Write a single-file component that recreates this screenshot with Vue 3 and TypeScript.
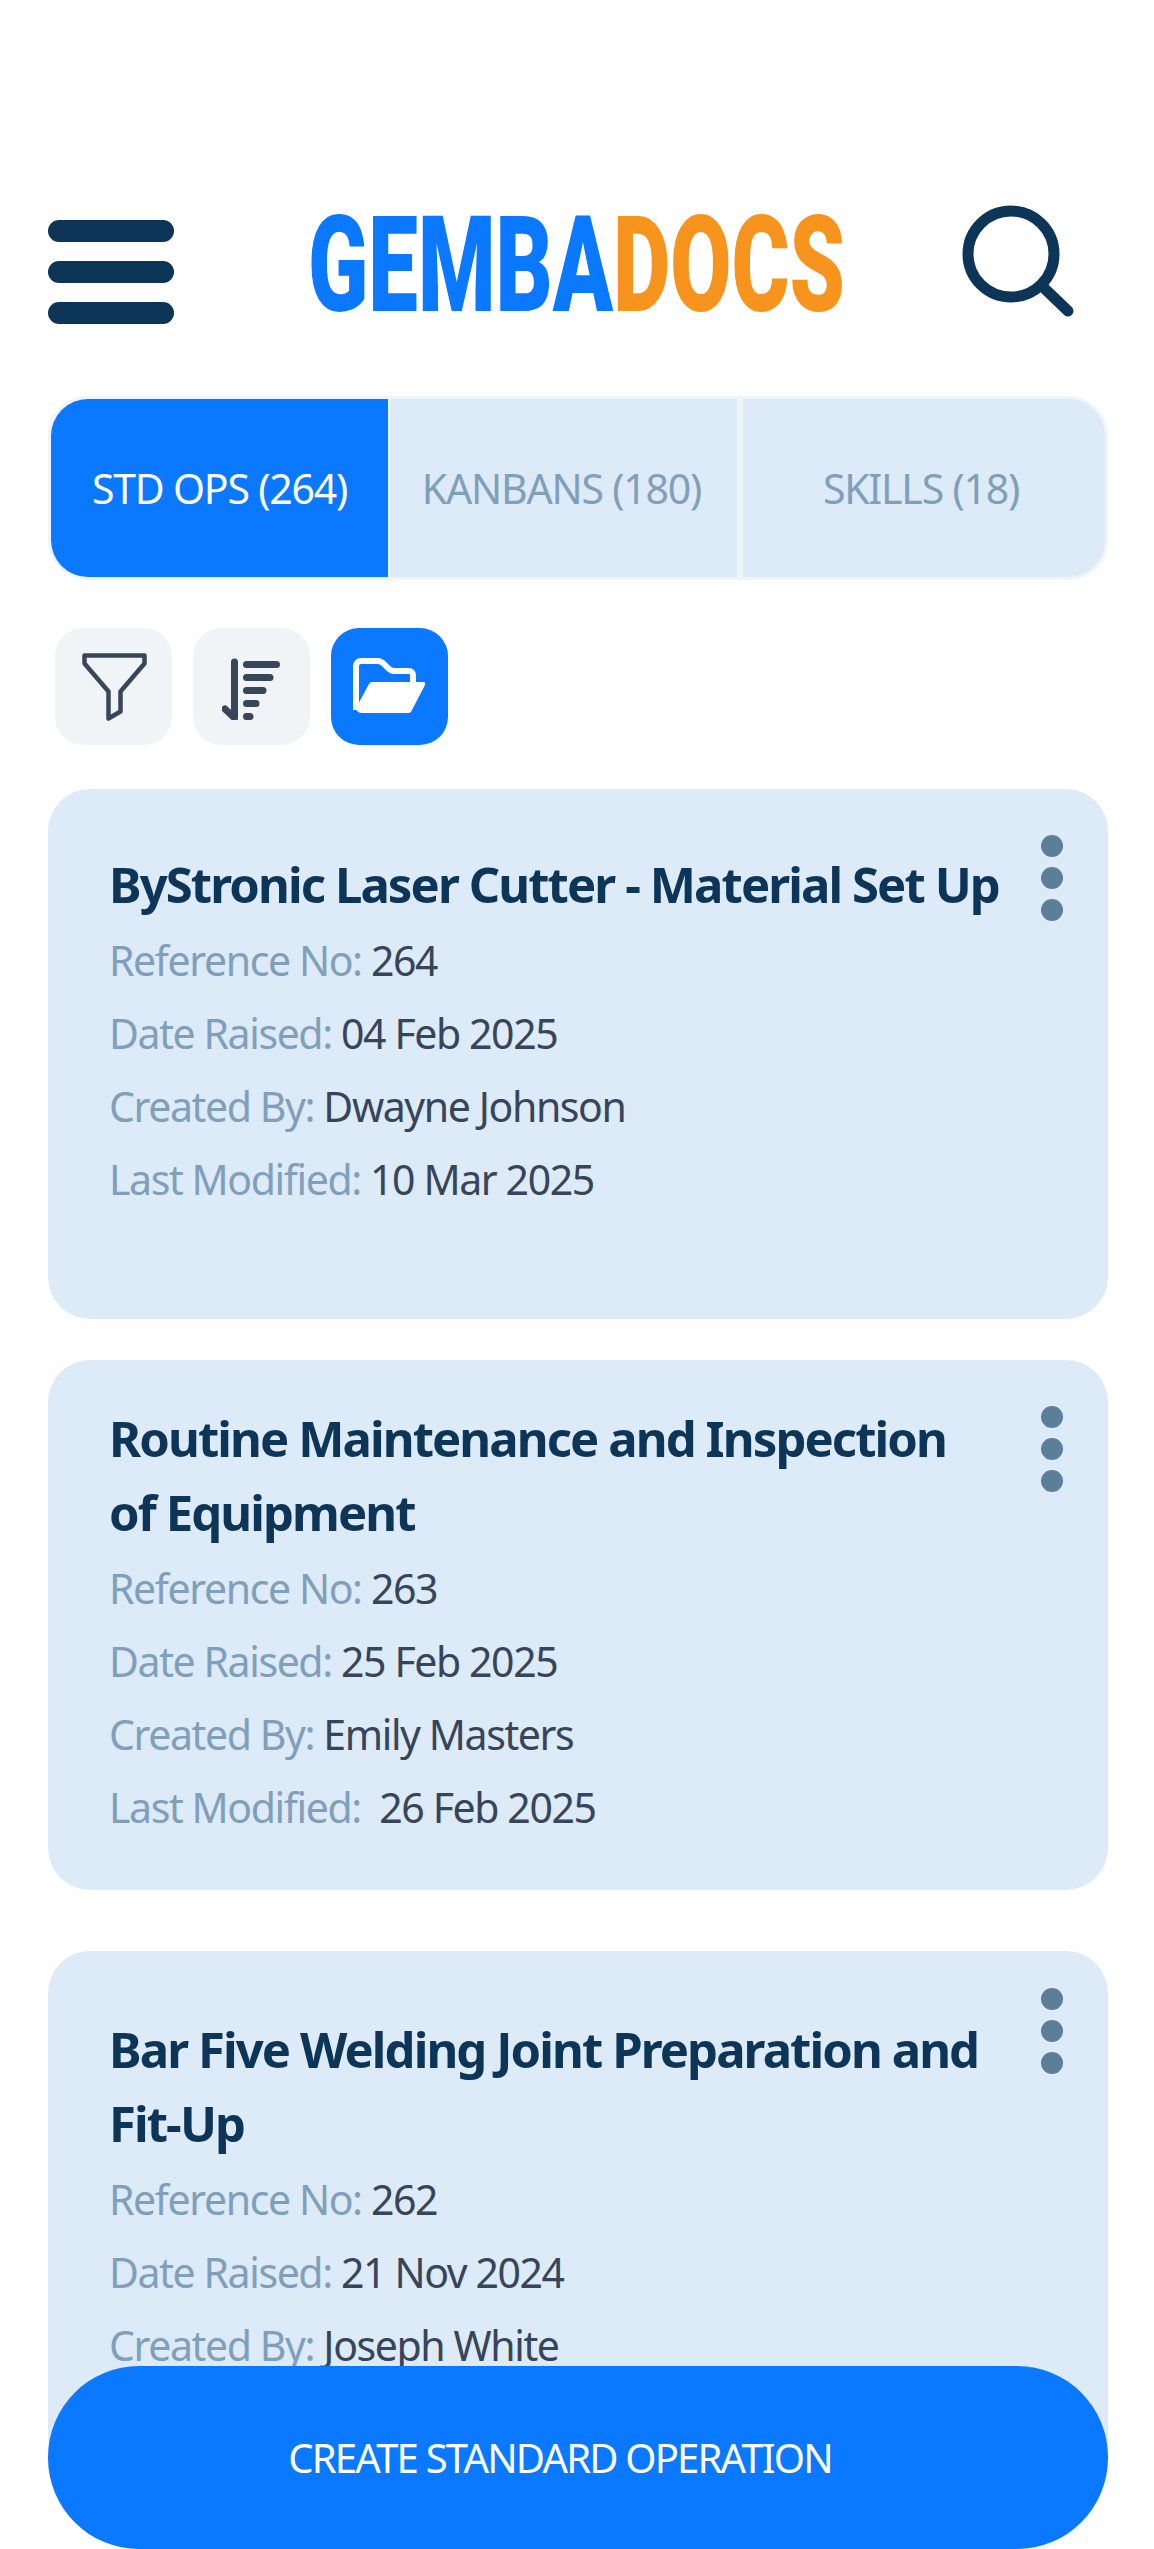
<script setup lang="ts">
interface Doc {
  title: string
  ref: string
  raised: string
  by: string
  modified?: string
  cls: string
}

const tabs = [
  { label: 'STD OPS (264)', cls: 'active' },
  { label: 'KANBANS (180)', cls: 'mid' },
  { label: 'SKILLS (18)', cls: 'last' },
]

const docs: Doc[] = [
  { title: 'ByStronic Laser Cutter - Material Set Up', ref: '264', raised: '04 Feb 2025', by: 'Dwayne Johnson', modified: '10 Mar 2025', cls: 'first' },
  { title: 'Routine Maintenance and Inspection of Equipment', ref: '263', raised: '25 Feb 2025', by: 'Emily Masters', modified: '\u00a026 Feb 2025', cls: 'second' },
  // last row of this one sits behind the button in the design
  { title: 'Bar Five Welding Joint Preparation and Fit-Up', ref: '262', raised: '21 Nov 2024', by: 'Joseph White', cls: 'third' },
]
</script>

<template>
  <div class="page">
    <header class="top">
      <div class="burger"><i></i><i></i><i></i></div>
      <div class="logo"><span class="blue">GEMBA</span><span class="orange">DOCS</span></div>
      <svg class="search" viewBox="0 0 113 112" fill="none" stroke="#0d3558" stroke-linecap="round">
        <circle cx="49" cy="49" r="43" stroke-width="11" />
        <path d="M82 83 L106 106" stroke-width="11" />
      </svg>
    </header>

    <nav class="tabs">
      <div v-for="t in tabs" :key="t.label" class="tab" :class="t.cls">{{ t.label }}</div>
    </nav>

    <div class="tools">
      <div class="tool">
        <svg viewBox="0 0 66 70" width="66" height="70" fill="none" stroke="#374659" stroke-width="4.5" stroke-linejoin="round">
          <path d="M3.5 3.5 H63.5 V11.5 L39.5 39.5 V59.5 L27.5 66.5 V39.5 L3.5 11.5 Z" />
        </svg>
      </div>
      <div class="tool">
        <svg viewBox="0 0 60 66" width="60" height="66" fill="none" stroke="#374659" stroke-width="7" stroke-linecap="round" stroke-linejoin="round">
          <path d="M12.5 8 V64 L3 55" />
          <path d="M24.5 10.5 H54.5 M24.5 23.5 H48 M24.5 36.5 H41 M24.5 49.5 H34 M24.5 62.5 H28" />
        </svg>
      </div>
      <div class="tool on">
        <svg viewBox="0 0 74 58" width="74" height="58">
          <path fill="none" stroke="#fff" stroke-width="6" d="M3 52 V8 a5 5 0 0 1 5-5 H25 q3 0 6 3 l4 4 q3 3 6 3 H56 a4 4 0 0 1 4 4 V24" />
          <path fill="#fff" d="M3 50 L16 26 a4 4 0 0 1 4-2 H70 a2 2 0 0 1 2 3 L59 52 a4 4 0 0 1-4 3 H8 a5 5 0 0 1-5-5 Z" />
        </svg>
      </div>
    </div>

    <main class="list">
      <article v-for="d in docs" :key="d.ref" class="card" :class="d.cls">
        <div class="dots"><i></i><i></i><i></i></div>
        <h2>{{ d.title }}</h2>
        <p><span>Reference No:</span> {{ d.ref }}</p>
        <p><span>Date Raised:</span> {{ d.raised }}</p>
        <p><span>Created By:</span> {{ d.by }}</p>
        <p v-if="d.modified"><span>Last Modified:</span> {{ d.modified }}</p>
      </article>
    </main>

    <button class="create">CREATE STANDARD OPERATION</button>
  </div>
</template>

<style scoped>
.page {
  position: relative;
  width: 1154px;
  height: 2549px;
  overflow: hidden;
  background: #fff;
  font-family: "Noto Sans", "Open Sans", sans-serif;
  padding: 205px 46px 0 48px;
  box-sizing: border-box;
}
.top {
  display: flex;
  align-items: flex-start;
  height: 112px;
}
.burger {
  display: flex;
  flex-direction: column;
  gap: 19px;
  width: 126px;
  margin-top: 15px;
}
.burger i {
  display: block;
  height: 22px;
  border-radius: 11px;
  background: #0d3558;
}
.logo {
  width: 537px;
  margin-left: 134px;
  margin-top: 8px;
  font-family: "Roboto", sans-serif;
  font-weight: 900;
  font-size: 108px;
  line-height: 104px;
  white-space: nowrap;
  transform: scale(0.82, 1.24);
  transform-origin: left center;
}
.blue { color: #0a78ff; }
.orange { color: #f7941d; }
.search {
  width: 113px;
  height: 112px;
  margin-left: 117px;
}
.tabs {
  display: flex;
  margin-top: 79px;
  height: 184px;
  border: 3px solid #eef4fa;
  border-radius: 40px;
  overflow: hidden;
  box-sizing: border-box;
  background: #eef4fa;
}
.tab {
  display: flex;
  align-items: center;
  justify-content: center;
  background: #ddeaf7;
  color: #7f9fbb;
  font-size: 41px;
  letter-spacing: -1.2px;
}
.tab.active {
  flex: 0 0 337px;
  background: #0a78ff;
  color: #fff;
}
.tab.mid {
  flex: 0 0 347px;
  margin-left: 2px;
  padding-right: 4px;
  box-sizing: border-box;
}
.tab.last {
  flex: 1;
  margin-left: 6px;
  padding-right: 6px;
}
.tools {
  display: flex;
  gap: 21px;
  margin: 48px 0 0 7px;
}
.tool {
  width: 117px;
  height: 117px;
  border-radius: 28px;
  background: #f1f4f7;
  display: flex;
  align-items: center;
  justify-content: center;
}
.tool.on { background: #0a78ff; }
.list {
  margin-top: 44px;
}
.card {
  position: relative;
  background: #ddeaf7;
  border-radius: 42px;
  padding: 58px 106px 0 61px;
  height: 530px;
  box-sizing: border-box;
  margin-bottom: 41px;
}
.card.second {
  padding-top: 41px;
  margin-bottom: 61px;
}
.card.third { padding-top: 61px; }
.card h2 {
  margin: 0 0 3px;
  font-size: 49px;
  line-height: 74px;
  font-weight: 700;
  letter-spacing: -1.9px;
  color: #0d3558;
}
.card p {
  margin: 0;
  font-size: 41px;
  line-height: 73px;
  letter-spacing: -1.4px;
  color: #36455a;
}
.card p span { color: #7f9fbb; }
.dots {
  position: absolute;
  right: 45px;
  top: 46px;
  display: flex;
  flex-direction: column;
  gap: 10px;
}
.third .dots { top: 37px; }
.dots i {
  display: block;
  width: 22px;
  height: 22px;
  border-radius: 50%;
  background: #5b7f98;
}
.create {
  position: absolute;
  left: 48px;
  right: 46px;
  bottom: 0;
  height: 183px;
  border: 0;
  border-radius: 91px;
  background: #0a78ff;
  color: #fff;
  font-family: inherit;
  font-size: 40px;
  letter-spacing: -1.8px;
  padding-right: 42px;
}
</style>
